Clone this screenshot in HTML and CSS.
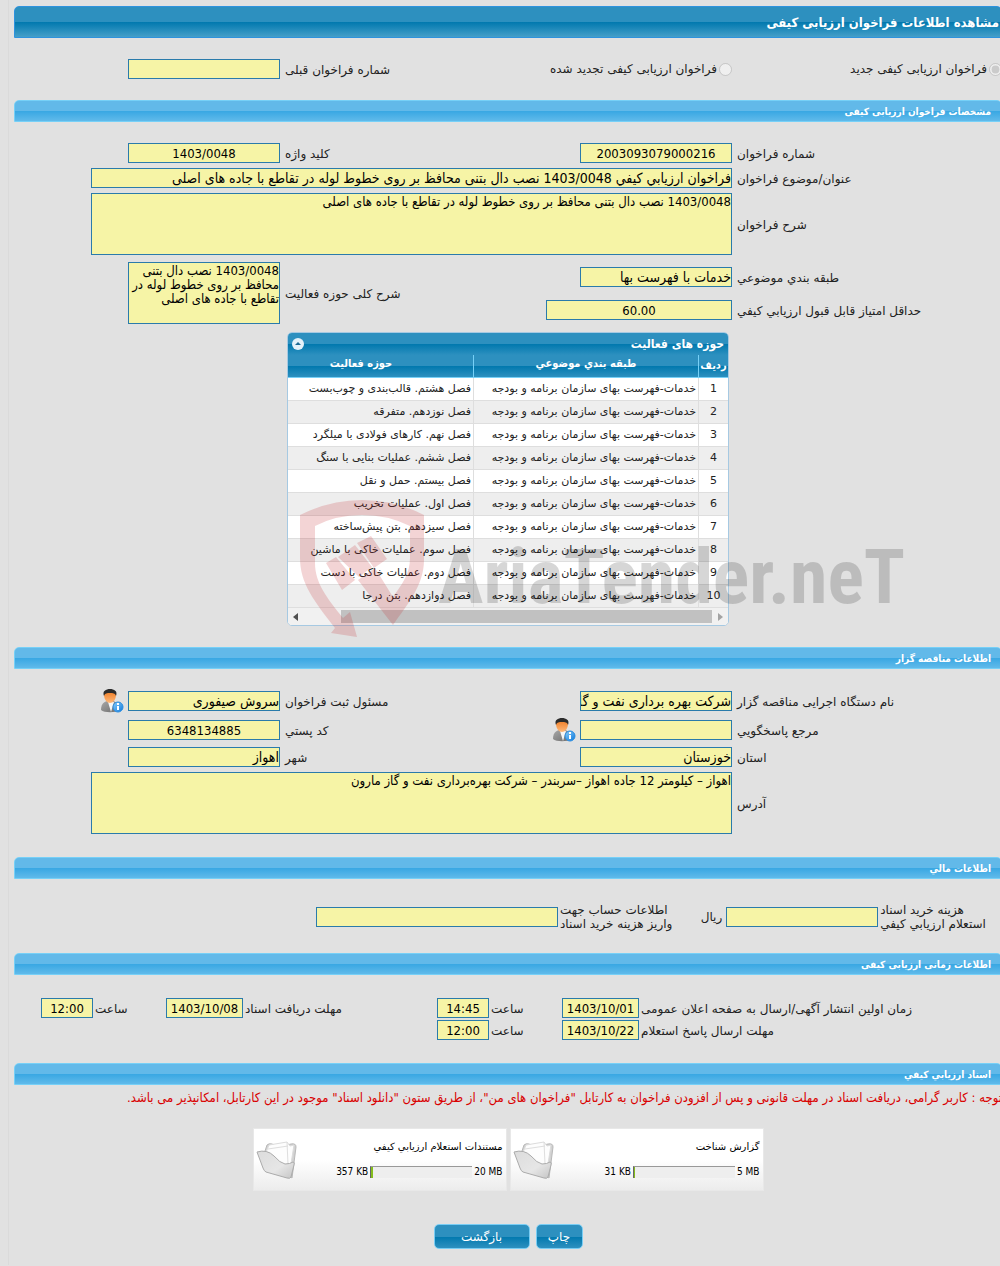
FILE: index.html
```html
<!DOCTYPE html>
<html lang="fa" dir="rtl">
<head>
    <meta charset="UTF-8">
    <meta name="viewport" content="width=device-width, initial-scale=1.0">
    <title>مشاهده اطلاعات فراخوان ارزیابی کیفی</title>
    <link rel="stylesheet" href="styles.css">
</head>
<body>
    <!-- Shared icons -->
    <svg class="icon-defs" width="0" height="0" aria-hidden="true">
        <defs>
            <linearGradient id="suit" x1="0" y1="0" x2="1" y2="1">
                <stop offset="0" stop-color="#a8a8a8"/>
                <stop offset="1" stop-color="#6c6c6c"/>
            </linearGradient>
            <linearGradient id="skin" x1="0" y1="0" x2="0" y2="1">
                <stop offset="0" stop-color="#f07f28"/>
                <stop offset="1" stop-color="#ffb97a"/>
            </linearGradient>
            <linearGradient id="info" x1="0" y1="0" x2="1" y2="1">
                <stop offset="0" stop-color="#8fd0fa"/>
                <stop offset="1" stop-color="#0b78dc"/>
            </linearGradient>
            <linearGradient id="flap" x1="0" y1="0" x2="1" y2="1">
                <stop offset="0" stop-color="#dcdcdc"/>
                <stop offset="0.6" stop-color="#e6e6e6"/>
                <stop offset="1" stop-color="#c4c4c4"/>
            </linearGradient>
            <symbol id="person" viewBox="0 0 24 24">
                <path d="M1 21c0-5 2-8 6-9h6c4 1 6 4 6 9-3 3-15 3-18 0z" fill="url(#suit)"/>
                <path d="M8 13l3 10 3-10z" fill="#f6f6f6"/>
                <path d="M4 5c0 6 3 9 6 9s6-3 6-9c-2-3-10-3-12 0z" fill="url(#skin)"/>
                <path d="M4 7C2 2 6 0 10 0s8 2 6 7c-1-3-3-3-6-3s-5 0-6 3z" fill="#2b2b2b"/>
                <circle cx="18" cy="18" r="5" fill="url(#info)" stroke="#2a8ce0"/>
                <path d="M17 14h2v2h-2zM17 17h2v4h-2z" fill="#fff"/>
            </symbol>
            <symbol id="folder" viewBox="0 0 44 40">
                <path d="M8 14l3-9q2-2 5-1l6 3 13-3q5-1 5 3l-4 31-8-6z" fill="#d2d2d2" stroke="#b8b8b8"/>
                <path d="M9 15l4-10 18-3 3 4 4-1-4 25-8-6z" fill="#fdfdfd" stroke="#dcdcdc"/>
                <path d="M12 9l20-3M31 2l1 22" stroke="#dedede" fill="none"/>
                <path d="M1 12q10-3 17 4 6 7 11 8 5 0 8-2 2 0 1 3l-3 12q-1 2-4 1L10 32q-2-1-3-4z" fill="url(#flap)" stroke="#ababab"/>
            </symbol>
        </defs>
    </svg>

    <main class="page">
        <h1 class="title-bar">مشاهده اطلاعات فراخوان ارزیابی کیفی</h1>

        <form class="form">
            <!-- Call type -->
            <div class="fields fields-type">
                <div class="choice">
                    <input type="radio" id="typeNew" name="type" checked disabled>
                    <label for="typeNew">فراخوان ارزیابی کیفی جدید</label>
                </div>
                <div class="choice">
                    <input type="radio" id="typeRenewed" name="type" disabled>
                    <label for="typeRenewed">فراخوان ارزیابی کیفی تجدید شده</label>
                </div>
                <label class="lbl" for="prevNo">شماره فراخوان قبلی</label>
                <input class="field" type="text" id="prevNo" readonly>
            </div>

            <!-- Call details -->
            <h2 class="section-bar">مشخصات فراخوان ارزیابی کیفی</h2>
            <div class="fields fields-details">
                <label class="lbl" for="callNo">شماره فراخوان</label>
                <input class="field num" type="text" id="callNo" value="2003093079000216" readonly>
                <label class="lbl" for="keyword">کلید واژه</label>
                <input class="field num" type="text" id="keyword" value="1403/0048" readonly>

                <label class="lbl" for="subject">عنوان/موضوع فراخوان</label>
                <input class="field wide" type="text" id="subject" value="فراخوان ارزيابي كيفي 1403/0048 نصب دال بتنی محافظ بر روی خطوط لوله در تقاطع با جاده های اصلی" readonly>

                <label class="lbl" for="description">شرح فراخوان</label>
                <textarea class="field area wide" id="description" readonly>1403/0048 نصب دال بتنی محافظ بر روی خطوط لوله در تقاطع با جاده های اصلی</textarea>
            </div>
            <div class="fields fields-scope">
                <label class="lbl" for="category">طبقه بندي موضوعي</label>
                <input class="field" type="text" id="category" value="خدمات با فهرست بها" readonly>
                <label class="lbl tall" for="scope">شرح کلی حوزه فعالیت</label>
                <textarea class="field area tall" id="scope" readonly>1403/0048 نصب دال بتنی محافظ بر روی خطوط لوله در تقاطع با جاده های اصلی</textarea>
                <label class="lbl" for="minScore">حداقل امتیاز قابل قبول ارزيابي كيفي</label>
                <input class="field num score" type="text" id="minScore" value="60.00" readonly>
            </div>

            <!-- Activity grid -->
            <div class="activity">
                <div class="grid">
                    <div class="grid-caption">
                        <span>حوزه های فعالیت</span>
                        <button class="collapse" type="button" aria-label="بستن">
                            <svg viewBox="0 0 12 12" width="12" height="12"><circle cx="6" cy="6" r="6" fill="#e4f1f9"/><path d="M3 7l3-3 3 3z" fill="#1c6a94"/></svg>
                        </button>
                    </div>
                    <div class="grid-view">
                        <table class="grid-table">
                            <thead>
                                <tr><th class="col-no">ردیف</th><th class="col-cat">طبقه بندي موضوعي</th><th class="col-act">حوزه فعالیت</th></tr>
                            </thead>
                            <tbody>
                                <tr><td>1</td><td>خدمات-فهرست بهای سازمان برنامه و بودجه</td><td>فصل هشتم. قالب‌بندی و چوب‌بست</td></tr>
                                <tr><td>2</td><td>خدمات-فهرست بهای سازمان برنامه و بودجه</td><td>فصل نوزدهم. متفرقه</td></tr>
                                <tr><td>3</td><td>خدمات-فهرست بهای سازمان برنامه و بودجه</td><td>فصل نهم. کارهای فولادی با میلگرد</td></tr>
                                <tr><td>4</td><td>خدمات-فهرست بهای سازمان برنامه و بودجه</td><td>فصل ششم. عملیات بنایی با سنگ</td></tr>
                                <tr><td>5</td><td>خدمات-فهرست بهای سازمان برنامه و بودجه</td><td>فصل بیستم. حمل و نقل</td></tr>
                                <tr><td>6</td><td>خدمات-فهرست بهای سازمان برنامه و بودجه</td><td>فصل اول. عملیات تخریب</td></tr>
                                <tr><td>7</td><td>خدمات-فهرست بهای سازمان برنامه و بودجه</td><td>فصل سیزدهم. بتن پیش‌ساخته</td></tr>
                                <tr><td>8</td><td>خدمات-فهرست بهای سازمان برنامه و بودجه</td><td>فصل سوم. عملیات خاکی با ماشین</td></tr>
                                <tr><td>9</td><td>خدمات-فهرست بهای سازمان برنامه و بودجه</td><td>فصل دوم. عملیات خاکی با دست</td></tr>
                                <tr><td>10</td><td>خدمات-فهرست بهای سازمان برنامه و بودجه</td><td>فصل دوازدهم. بتن درجا</td></tr>
                            </tbody>
                        </table>
                    </div>
                    <div class="scrollbar">
                        <svg viewBox="0 0 16 16" width="16" height="16"><path d="M6 4l5 4-5 4z" fill="#a3a3a3"/></svg>
                        <div class="scroll-track"><div class="scroll-thumb"></div></div>
                        <svg viewBox="0 0 16 16" width="16" height="16"><path d="M10 4L5 8l5 4z" fill="#505050"/></svg>
                    </div>
                </div>
                <!-- Watermark -->
                <svg class="watermark" viewBox="0 0 610 140" width="610" height="140" aria-hidden="true">
                    <g class="mark">
                        <path fill-rule="evenodd" d="M0 17Q30 2 62 2Q95 2 124 17V62C124 88 106 108 93 127L58 82L75 70L93 99C102 86 110 76 110 60V28Q88 17 62 17Q36 17 15 28V65C15 85 27 100 43 120L50 114L57 139L31 135L35 130C14 103 0 85 0 60Z"/>
                        <path d="M26 65l10-6 19 23-13 10zM38 59l17-12 17 22-13 10zM57 45l14-7 16 23-13 9z"/>
                    </g>
                    <text x="138" y="105">AriaTender.neT</text>
                </svg>
            </div>

            <!-- Tender holder -->
            <h2 class="section-bar">اطلاعات مناقصه گزار</h2>
            <div class="fields fields-holder">
                <label class="lbl" for="agency">نام دستگاه اجرایی مناقصه گزار</label>
                <input class="field" type="text" id="agency" value="شرکت بهره برداری نفت و گاز مارون" readonly>
                <label class="lbl" for="registrar">مسئول ثبت فراخوان</label>
                <div class="with-icon">
                    <input class="field" type="text" id="registrar" value="سروش صیفوری" readonly>
                    <button class="person" type="button" aria-label="مشخصات مسئول ثبت"><svg width="24" height="24"><use href="#person"/></svg></button>
                </div>

                <label class="lbl" for="contact">مرجع پاسخگويي</label>
                <div class="with-icon">
                    <input class="field" type="text" id="contact" readonly>
                    <button class="person" type="button" aria-label="مشخصات مرجع پاسخگويي"><svg width="24" height="24"><use href="#person"/></svg></button>
                </div>
                <label class="lbl" for="postCode">کد پستي</label>
                <input class="field num" type="text" id="postCode" value="6348134885" readonly>

                <label class="lbl" for="province">استان</label>
                <input class="field" type="text" id="province" value="خوزستان" readonly>
                <label class="lbl" for="city">شهر</label>
                <input class="field" type="text" id="city" value="اهواز" readonly>

                <label class="lbl" for="address">آدرس</label>
                <textarea class="field area wide" id="address" readonly>اهواز – کیلومتر 12 جاده اهواز –سربندر – شرکت بهره‌برداری نفت و گاز مارون</textarea>
            </div>

            <!-- Finance -->
            <h2 class="section-bar">اطلاعات مالي</h2>
            <div class="finance">
                <label class="lbl" for="cost">هزینه خرید اسناد<br>استعلام ارزيابي كيفي</label>
                <div class="with-icon">
                    <input class="field" type="text" id="cost" readonly>
                    <span>ریال</span>
                </div>
                <label class="lbl" for="account">اطلاعات حساب جهت<br>واریز هزینه خرید اسناد</label>
                <input class="field account" type="text" id="account" readonly>
            </div>

            <!-- Schedule -->
            <h2 class="section-bar">اطلاعات زمانی ارزیابی کیفی</h2>
            <div class="schedule">
                <label class="lbl" for="publishDate">زمان اولین انتشار آگهی/ارسال به صفحه اعلان عمومی</label>
                <input class="field num" type="text" id="publishDate" value="1403/10/01" readonly>
                <label class="lbl" for="publishTime">ساعت</label>
                <input class="field num" type="text" id="publishTime" value="14:45" readonly>
                <label class="lbl" for="docsDate">مهلت دریافت اسناد</label>
                <input class="field num" type="text" id="docsDate" value="1403/10/08" readonly>
                <label class="lbl" for="docsTime">ساعت</label>
                <input class="field num" type="text" id="docsTime" value="12:00" readonly>
                <label class="lbl second" for="replyDate">مهلت ارسال پاسخ استعلام</label>
                <input class="field num" type="text" id="replyDate" value="1403/10/22" readonly>
                <label class="lbl" for="replyTime">ساعت</label>
                <input class="field num" type="text" id="replyTime" value="12:00" readonly>
            </div>

            <!-- Documents -->
            <h2 class="section-bar">اسناد ارزيابي كيفي</h2>
            <p class="notice">توجه : کاربر گرامی، دریافت اسناد در مهلت قانونی و پس از افزودن فراخوان به کارتابل "فراخوان های من"، از طریق ستون "دانلود اسناد" موجود در این کارتابل، امکانپذیر می باشد.</p>
            <div class="docs">
                <div class="doc">
                    <div class="doc-info">
                        <div class="doc-name">گزارش شناخت</div>
                        <div class="doc-size">
                            <bdi>5 MB</bdi>
                            <div class="bar"><div class="bar-fill" style="width: 1%"></div></div>
                            <bdi>31 KB</bdi>
                        </div>
                    </div>
                    <svg width="44" height="40"><use href="#folder"/></svg>
                </div>
                <div class="doc">
                    <div class="doc-info">
                        <div class="doc-name">مستندات استعلام ارزيابي كيفي</div>
                        <div class="doc-size">
                            <bdi>20 MB</bdi>
                            <div class="bar"><div class="bar-fill" style="width: 2%"></div></div>
                            <bdi>357 KB</bdi>
                        </div>
                    </div>
                    <svg width="44" height="40"><use href="#folder"/></svg>
                </div>
            </div>

            <div class="actions">
                <button class="btn" type="button">چاپ</button>
                <button class="btn btn-back" type="button">بازگشت</button>
            </div>
        </form>
    </main>
</body>
</html>
```

FILE: styles.css
```css
* {
    box-sizing: border-box;
}
body {
    margin: 0;
    background: #e1e1e1;
    color: #222;
    font-family: Tahoma, "DejaVu Sans", sans-serif;
    font-size: 12px;
    line-height: 14px;
    overflow-x: hidden;
}
.icon-defs {
    position: absolute;
}
.page {
    margin: 0 -2px 0 8px;
    padding: 6px 0 16px 5px;
    border-left: 1px solid #dadada;
}
.title-bar,
.section-bar,
.field,
.notice,
.grid-caption,
.grid-table th,
.doc-size {
    font-family: Tahoma, "DejaVu Sans Condensed", "DejaVu Sans", sans-serif;
}
.title-bar {
    margin: 0;
    padding: 0 2px;
    height: 32px;
    line-height: 32px;
    font-size: 13px;
    color: #fff;
    border: 1px solid #2e93de;
    border-radius: 5px 5px 0 0;
    background: linear-gradient(#2d90bf 50%, #0078ae 50%, #459fc9);
}
.section-bar {
    margin: 0;
    padding: 0 10px;
    height: 22px;
    line-height: 22px;
    font-size: 10px;
    color: #fff;
    border: 1px solid #76d0f7;
    border-radius: 5px 5px 0 0;
    background: linear-gradient(#62b9e9 50%, #38a7e3 50%, #60baea);
}

/* Fields */
.fields {
    display: grid;
    grid-template-columns: 270fr 300fr 152fr 266fr;
    align-items: center;
    row-gap: 5px;
}
.fields-type {
    padding: 21px 0;
}
.fields-details {
    padding: 21px 0 7px;
}
.fields-scope {
    grid-template-rows: 30px 28px;
    row-gap: 4px;
}
.fields-holder {
    grid-template-rows: 24px 24px 20px auto;
    padding: 20px 0 23px;
}
.lbl {
    padding-top: 1px;
    padding-left: 5px;
    text-align: left;
    white-space: nowrap;
}
.field {
    display: block;
    margin: 0;
    padding: 0;
    width: 152px;
    height: 20px;
    font-size: 14px;
    color: #000;
    background: #f6f4a6;
    border: 1px solid #2a7bab;
    border-radius: 0;
    outline: none;
}
.num {
    font-size: 13px;
    text-align: center;
    direction: ltr;
}
.area {
    height: 62px;
    padding: 1px 0;
    font-size: 13px;
    line-height: 14px;
    resize: none;
    overflow: hidden;
}
.wide {
    grid-column: span 3;
    width: calc(100% - 77px);
}
.tall {
    grid-row: span 2;
}
.score {
    width: 186px;
}
.choice {
    display: flex;
    align-items: center;
    gap: 2px;
}
.choice input {
    margin: 0;
    width: 13px;
    height: 13px;
}
.with-icon {
    display: flex;
    align-items: center;
    gap: 4px;
}
.person {
    padding: 0;
    height: 24px;
    border: 0;
    background: none;
}

/* Activity grid */
.activity {
    position: relative;
    width: 442px;
    margin: 8px auto 21px;
}
.grid {
    border: 1px solid #a6c9e2;
    border-radius: 5px;
    overflow: hidden;
    background: #fff;
}
.grid-caption {
    display: flex;
    align-items: center;
    justify-content: space-between;
    height: 22px;
    padding: 0 4px;
    font-size: 12px;
    font-weight: bold;
    color: #fff;
    background: linear-gradient(#2d90bf 50%, #0078ae 50%, #2d90bf);
}
.collapse {
    display: flex;
    padding: 0;
    border: 0;
    background: none;
}
.grid-view {
    overflow: hidden;
}
.grid-table {
    width: 480px;
    table-layout: fixed;
    border-collapse: separate;
    border-spacing: 0;
    font-size: 11px;
}
.grid-table th {
    height: 23px;
    padding: 0 0 4px;
    font-size: 11px;
    color: #fff;
    border-left: 1px solid #76d0f7;
    border-bottom: 1px solid #76d0f7;
    background: linear-gradient(#2d90bf 50%, #0078ae 50%, #2d90bf);
    white-space: nowrap;
}
.grid-table .col-no {
    width: 30px;
    padding: 0;
}
.col-cat {
    width: 225px;
}
.grid-table td {
    height: 23px;
    padding: 0 2px;
    border-left: 1px solid #dedede;
    border-bottom: 1px solid #dedede;
    white-space: nowrap;
}
.grid-table td:first-child {
    text-align: center;
}
.grid-table tbody tr:nth-child(even) {
    background: #eee;
}
.scrollbar {
    display: flex;
    align-items: center;
    height: 17px;
    background: #f1f1f1;
}
.scroll-track {
    flex: 1;
}
.scroll-thumb {
    width: 91%;
    height: 13px;
    background: #c1c1c1;
}
.watermark {
    position: absolute;
    top: 166px;
    left: 13px;
    direction: ltr;
    pointer-events: none;
}
.watermark .mark {
    fill: #c1272d;
    fill-opacity: 0.2;
}
.watermark text {
    font-family: "Liberation Sans Narrow", "Roboto Condensed", Roboto, sans-serif;
    font-size: 76px;
    font-weight: bold;
    fill: #000;
    fill-opacity: 0.16;
}

/* Finance and schedule */
.finance {
    display: grid;
    grid-template-columns: 124fr 176fr 143fr 545fr;
    align-items: center;
    padding: 23px 0 22px;
}
.schedule {
    display: grid;
    grid-template-columns: 363fr 77px 73fr 52px 194fr 77px 73fr 52px 27fr;
    align-items: center;
    row-gap: 2px;
    padding: 23px 0;
}
.finance .lbl,
.schedule .lbl {
    padding-left: 2px;
}
.account {
    width: 242px;
}
.schedule .field {
    width: 100%;
}
.second {
    grid-column: 1;
}

/* Documents */
.notice {
    margin: 6px 0 23px;
    font-size: 13px;
    color: #d90000;
    white-space: nowrap;
}
.docs {
    display: flex;
    justify-content: center;
    gap: 3px;
}
.doc {
    display: flex;
    align-items: center;
    width: 254px;
    height: 63px;
    padding: 0 3px 0 2px;
    border: 1px solid #e8e8e8;
    background: linear-gradient(#fff 50%, #ececec);
    font-size: 10px;
    color: #000;
}
.doc-info {
    flex: 1;
}
.doc-size {
    display: flex;
    align-items: center;
    gap: 2px;
    margin-top: 11px;
}
.bar {
    width: 102px;
    height: 12px;
    direction: ltr;
    background: #eee;
    border-top: 1px solid #999;
    border-left: 1px solid #666;
}
.bar-fill {
    height: 100%;
    background: #84bd1c;
}
.actions {
    display: flex;
    justify-content: center;
    gap: 6px;
    margin-top: 33px;
}
.btn {
    height: 25px;
    min-width: 47px;
    padding: 0 10px;
    font-family: inherit;
    font-size: 12px;
    color: #fff;
    border: 1px solid #78cdf4;
    border-radius: 5px;
    background: linear-gradient(#2d90bf 50%, #0078ae 50%, #2d90bf);
}
.btn-back {
    min-width: 96px;
}
```
